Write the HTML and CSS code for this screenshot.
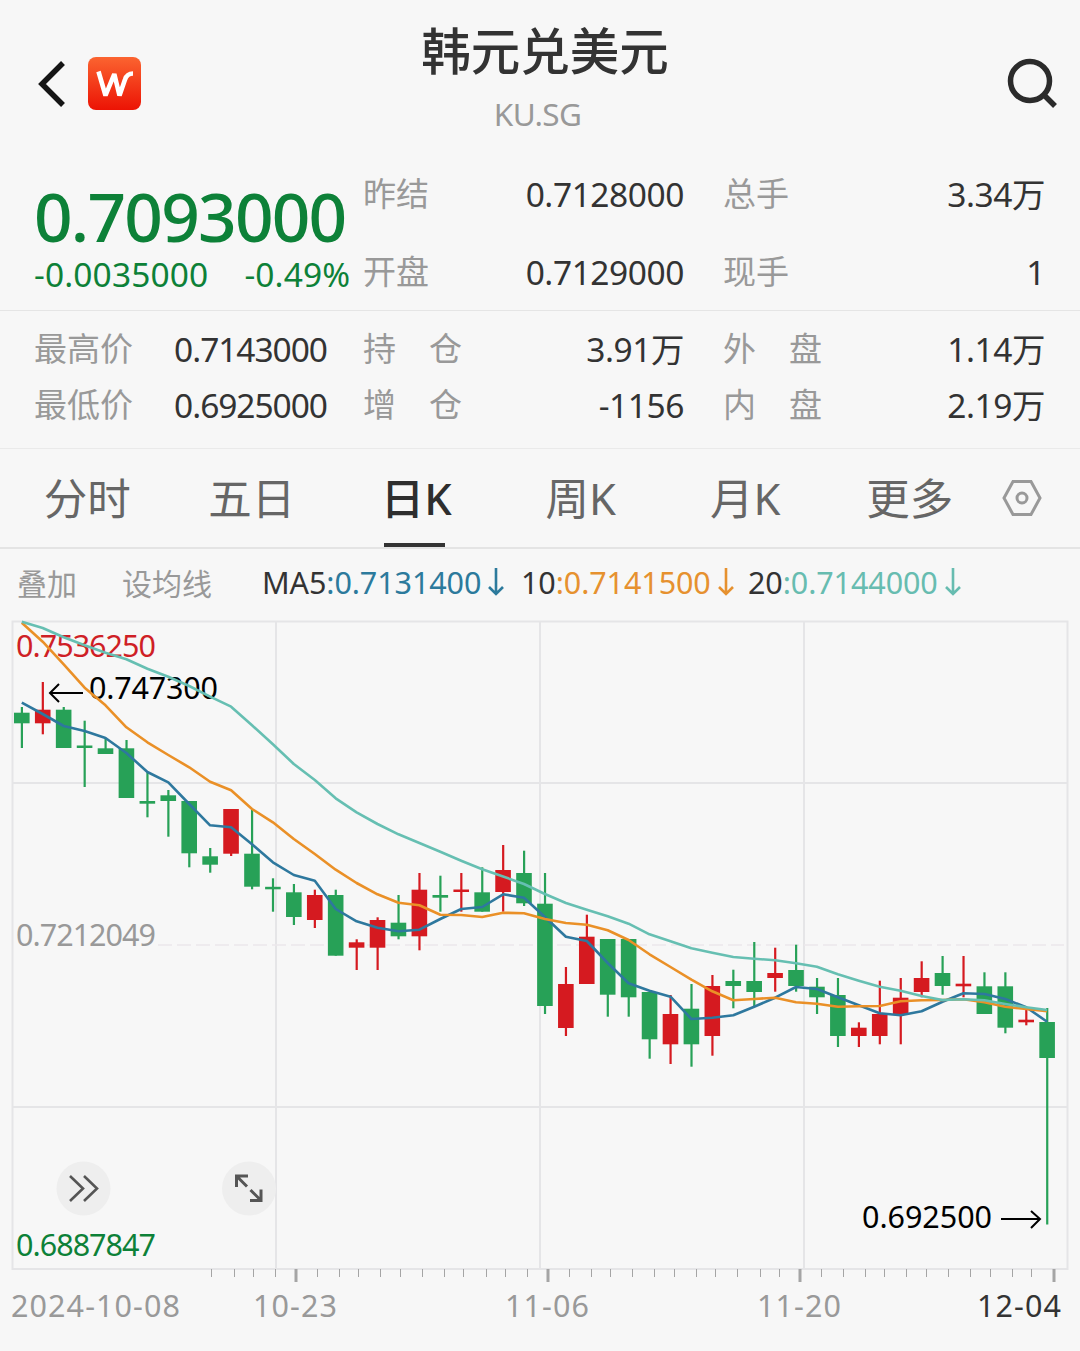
FILE: index.html
```html
<!DOCTYPE html>
<html lang="zh-CN">
<head>
    <meta charset="UTF-8">
    <title>韩元兑美元 KU.SG</title>
    <link rel="stylesheet" href="styles.css">
</head>
<body>
    <header class="header">
        <div class="nav-left">
            <svg class="back" width="28" height="46" viewBox="0 0 28 46"><path d="M25 2 L4 23 L25 44"/></svg>
            <svg class="logo" width="53" height="53" viewBox="0 0 53 53">
                <defs>
                    <linearGradient id="logoBg" x1="0" y1="0" x2="0" y2="1">
                        <stop offset="0" stop-color="#fb6430"/>
                        <stop offset="1" stop-color="#ec1304"/>
                    </linearGradient>
                </defs>
                <rect width="53" height="53" rx="8" fill="url(#logoBg)"/>
                <path class="logo-mark" d="M10.500 14.500 L17.500 38.500 L26.300 17 L31.500 38.500 L37 22.500 Q39 16.500 45 16.500"/>
            </svg>
        </div>
        <div class="title">
            <h1>韩元兑美元</h1>
            <p>KU.SG</p>
        </div>
        <svg class="search" width="54" height="54" viewBox="0 0 54 54"><circle cx="24" cy="24" r="19.5"/><path d="M38 38 L49 49"/></svg>
    </header>

    <section class="quote">
        <div class="price">
            <div class="last">0.7093000</div>
            <div class="change"><span>-0.0035000</span><span>-0.49%</span></div>
        </div>
        <div class="item"><label>昨结</label><span>0.7128000</span></div>
        <div class="item"><label>总手</label><span>3.34万</span></div>
        <div class="item"><label>开盘</label><span>0.7129000</span></div>
        <div class="item"><label>现手</label><span>1</span></div>
    </section>

    <section class="quote detail">
        <div class="item first"><label>最高价</label><span>0.7143000</span></div>
        <div class="item"><label>持　仓</label><span>3.91万</span></div>
        <div class="item"><label>外　盘</label><span>1.14万</span></div>
        <div class="item first"><label>最低价</label><span>0.6925000</span></div>
        <div class="item"><label>增　仓</label><span>-1156</span></div>
        <div class="item"><label>内　盘</label><span>2.19万</span></div>
    </section>

    <nav class="tabs">
        <a class="tab">分时</a>
        <a class="tab">五日</a>
        <a class="tab active">日K</a>
        <a class="tab">周K</a>
        <a class="tab">月K</a>
        <a class="tab">更多</a>
        <svg class="settings" width="40" height="38" viewBox="0 0 40 38"><path d="M11 2.500 H29 L38 19 L29 35.500 H11 L2 19 Z"/><circle cx="20" cy="19" r="5"/></svg>
    </nav>

    <div class="ma-bar">
        <span class="overlay">叠加</span>
        <span class="set-ma">设均线</span>
        <span class="ma ma5"><b>MA5</b>:0.7131400<svg width="18" height="28" viewBox="0 0 18 28"><path d="M9 0 V26 M2 19 L9 26 L16 19"/></svg></span>
        <span class="ma ma10"><b>10</b>:0.7141500<svg width="18" height="28" viewBox="0 0 18 28"><path d="M9 0 V26 M2 19 L9 26 L16 19"/></svg></span>
        <span class="ma ma20"><b>20</b>:0.7144000<svg width="18" height="28" viewBox="0 0 18 28"><path d="M9 0 V26 M2 19 L9 26 L16 19"/></svg></span>
    </div>

    <svg class="chart" width="1080" height="731" viewBox="0 620 1080 731">
        <g class="grid">
            <path d="M276 621 V1269 M540 621 V1269 M804 621 V1269"/>
            <path d="M12 783 H1067 M12 1107 H1067"/>
            <path class="mid" d="M158 945 H1064"/>
            <rect x="12.5" y="621.5" width="1055" height="647.5"/>
        </g>

        <g class="tool">
            <circle cx="83.5" cy="1188.5" r="27"/>
            <path d="M70 1176 L83 1188.500 L70 1201 M84 1176 L97 1188.500 L84 1201"/>
        </g>
        <g class="tool expand">
            <circle cx="249" cy="1188.5" r="27"/>
            <path d="M236.500 1187 V1176 H248 M237 1176.500 L247 1186.500 M250.500 1190 L261 1200.500 M250 1200.500 H261 V1189.500"/>
        </g>

        <g id="candles"></g>
        <g id="ticks"></g>

        <text class="top-price" x="16" y="657" textLength="140">0.7536250</text>
        <text class="mid-price" x="16" y="946" textLength="140">0.7212049</text>
        <text class="low-price" x="16" y="1256" textLength="140">0.6887847</text>

        <text class="mark" x="89" y="699" textLength="129">0.747300</text>
        <path class="mark-arrow" d="M83 693 H50 M59 684 L50 693 L59 702"/>
        <text class="mark" x="862" y="1228" textLength="130">0.692500</text>
        <path class="mark-arrow" d="M1001 1219 H1040 M1031 1211 L1040 1219 L1031 1228"/>

        <g id="lines"></g>

        <text class="date" x="11" y="1317" textLength="169">2024-10-08</text>
        <text class="date" x="253" y="1317" textLength="84">10-23</text>
        <text class="date" x="505" y="1317" textLength="84">11-06</text>
        <text class="date" x="757" y="1317" textLength="84">11-20</text>
        <text class="date today" x="977" y="1317" textLength="84">12-04</text>
    </svg>
    <script src="chart.js"></script>
</body>
</html>
```

FILE: styles.css
```css
* {
    box-sizing: border-box;
}
body {
    margin: 0;
    width: 1080px;
    background-color: #f7f7f7;
    color: #333;
    font-family: "Noto Sans", "Noto Sans CJK SC", sans-serif;
}
.header {
    display: grid;
    grid-template-columns: 160px 1fr 160px;
    height: 155px;
}
.nav-left {
    display: flex;
    align-items: center;
    height: 55px;
    margin-top: 56px;
    padding-left: 38px;
    gap: 22px;
}
.back {
    fill: none;
    stroke: #151515;
    stroke-width: 5.5;
}
.logo-mark {
    fill: none;
    stroke: white;
    stroke-width: 4.6;
    stroke-linejoin: bevel;
}
.title {
    text-align: center;
}
.title h1 {
    margin: 15px 0 0;
    padding-left: 10px;
    font-size: 49.5px;
    font-weight: 500;
    line-height: 72px;
}
.title p {
    margin: 5px 0 0;
    padding-right: 5px;
    font-size: 31.5px;
    line-height: 44px;
    letter-spacing: -0.02em;
    color: #999;
}
.search {
    justify-self: end;
    margin: 57px 20px 0 0;
    fill: none;
    stroke: #2b2b2b;
    stroke-width: 5.5;
}
.quote {
    display: grid;
    grid-template-columns: 329px 321px 322px;
    grid-template-rows: 78px 78px;
    height: 156px;
    padding-left: 34px;
    border-bottom: 1px solid #e5e5e5;
}
.price {
    grid-row: 1 / 3;
    color: #0d8138;
}
.last {
    height: 80px;
    margin-top: 21px;
    line-height: 80px;
    font-size: 67.5px;
    font-weight: 500;
    letter-spacing: -0.026em;
}
.change {
    display: flex;
    gap: 36px;
    line-height: 36px;
    font-size: 33.5px;
    letter-spacing: 0.004em;
}
.item {
    display: flex;
    align-items: center;
    justify-content: space-between;
    font-size: 33.5px;
    letter-spacing: -0.013em;
    line-height: 40px;
}
.item:nth-child(odd):not(.first) {
    margin-left: 39px;
    margin-right: -39px;
}
.item label {
    font-size: 33px;
    letter-spacing: 0;
    color: #999;
}
.detail {
    grid-template-rows: 56px 56px;
    height: 138px;
    padding-top: 10px;
    border-color: #eaeaea;
}
.detail .item:nth-child(3n+2) {
    margin: 0;
}
.detail .item:nth-child(3n) {
    margin-left: 39px;
    margin-right: -39px;
}
.detail .first {
    margin: 0;
    padding-right: 36px;
    letter-spacing: -0.031em;
}
.tabs {
    display: flex;
    align-items: center;
    height: 100px;
    padding-left: 5px;
    border-bottom: 2px solid #e4e4e4;
}
.tab {
    position: relative;
    width: 164.5px;
    line-height: 98px;
    font-size: 43.5px;
    text-align: center;
    color: #666;
}
.tab.active {
    color: #2e2e2e;
    font-weight: 500;
}
.tab.active::after {
    content: "";
    position: absolute;
    left: 50px;
    bottom: 0;
    width: 61px;
    height: 4px;
    background-color: #333;
}
.settings {
    margin-left: 10px;
    fill: none;
    stroke: #999;
    stroke-width: 3;
}
.ma-bar {
    display: flex;
    align-items: center;
    height: 71px;
    padding: 0 0 5px 17px;
    font-size: 30px;
    color: #999;
}
.set-ma {
    margin-left: 45px;
}
.ma {
    display: flex;
    align-items: center;
    width: 227px;
    font-size: 30.5px;
    letter-spacing: -0.003em;
}
.ma b {
    color: #333;
    font-weight: 400;
}
.ma svg {
    margin-left: 6px;
    fill: none;
    stroke: currentColor;
    stroke-width: 2.6;
}
.ma5 {
    width: 259px;
    margin-left: 50px;
    color: #2c7a9c;
}
.ma10 {
    color: #e6912f;
}
.ma20 {
    color: #67bcb0;
}
.chart {
    display: block;
    font-size: 30.5px;
}
.grid path, .grid rect {
    fill: none;
    stroke: #e5e5e7;
    stroke-width: 2;
}
.grid .mid {
    stroke: #ebe8eb;
    stroke-width: 1.5;
    stroke-dasharray: 14 5;
}
.tool circle {
    fill: #eee;
}
.tool path {
    fill: none;
    stroke: #555;
    stroke-width: 2.6;
}
.expand path {
    stroke-width: 3;
}
.up {
    fill: #d51a20;
}
.down {
    fill: #27a157;
}
.line {
    fill: none;
    stroke-width: 2.6;
    stroke-linejoin: round;
}
.line5 {
    stroke: #2e789e;
}
.line10 {
    stroke: #ea9027;
}
.line20 {
    stroke: #66bfb2;
}
.tick {
    fill: #a5a5a5;
}
.top-price {
    fill: #cf1f26;
}
.mid-price, .date {
    fill: #999;
}
.low-price {
    fill: #0d8138;
}
.mark {
    fill: #000;
}
.mark-arrow {
    fill: none;
    stroke: #000;
    stroke-width: 2;
}
.date.today {
    fill: #333;
}
```

FILE: chart.js
```js
const SVG_NS = 'http://www.w3.org/2000/svg';
const START_X = 21.8;
const STEP = 20.925;

// direction, high, body top, body bottom, low
const candles = [
    ['down', 707, 712.7, 723.3, 748], ['up', 682, 709.7, 723.3, 734.3],
    ['down', 707, 709.7, 748, 748], ['down', 720.7, 745.5, 748, 787],
    ['down', 738.3, 748.3, 754, 754], ['down', 740, 748.3, 798, 798],
    ['down', 772.3, 801, 803.7, 817.3], ['down', 790, 795.3, 801, 836.7],
    ['down', 801, 801, 853.3, 867.3], ['down', 848, 856.3, 864.7, 872.7],
    ['up', 809, 809, 853.7, 856], ['down', 809, 853.7, 886.7, 889.3],
    ['down', 878.3, 886.8, 889.3, 911.7], ['down', 884, 892.3, 917, 925],
    ['up', 889.7, 895, 920, 928], ['down', 889.7, 895, 955.7, 955.7],
    ['up', 939.3, 942.3, 947.7, 970], ['up', 917.3, 920, 947.7, 970],
    ['down', 895, 922.7, 936.3, 939.3], ['up', 873, 889.7, 936.3, 950.3],
    ['down', 875.7, 895, 897.7, 911.7], ['up', 873, 889.5, 892, 911.7],
    ['down', 867.3, 892.3, 911.7, 911.7], ['up', 845, 870, 892, 911.7],
    ['down', 850.7, 873, 903.3, 906], ['down', 873, 903.7, 1006, 1014],
    ['up', 967, 984, 1028, 1036], ['up', 914.7, 936.7, 984, 984],
    ['down', 939, 939, 994.7, 1016.7], ['down', 939, 939, 997.3, 1016.7],
    ['down', 992, 992, 1039.3, 1058.7], ['up', 995, 1014, 1044.3, 1064],
    ['down', 984, 1008.7, 1044.3, 1066.7], ['up', 975, 986, 1036, 1055.7],
    ['down', 969.7, 981, 986, 1008.3], ['down', 942, 981, 992, 1006],
    ['up', 947.7, 973, 978, 991.7], ['down', 944.7, 970, 986, 991.7],
    ['down', 978, 986.7, 997.3, 1014], ['down', 978, 995, 1036, 1047],
    ['up', 1022.3, 1027.7, 1036, 1047], ['up', 980.7, 1014, 1036, 1044.3],
    ['up', 978, 997.7, 1014, 1044.3], ['up', 961.3, 978, 992, 997.3],
    ['down', 956, 973, 986, 994.7], ['up', 956, 983.7, 986.3, 997.3],
    ['down', 972.3, 986.3, 1014, 1014], ['down', 972.3, 986.3, 1027.7, 1033.3],
    ['up', 1008.7, 1019.7, 1022.3, 1025.3], ['down', 1008, 1022, 1058, 1224.5]
];

const averages = {
    line5: [702.7, 714, 726, 731, 738, 753, 772, 782.3, 804, 825.3, 827.3, 844.3, 862.3, 875, 880.7, 909, 921.3, 927.7, 931.3, 929.7, 919, 909, 907, 894.3, 897.7, 917, 936.7, 941, 963, 983.3, 990.7, 996.7, 1019, 1017.7, 1015.3, 1006.7, 997.7, 987, 989, 997.3, 1005.3, 1013.3, 1015.3, 1011.3, 1001.7, 993.3, 994, 999, 1007.3, 1021.7],
    line10: [622.7, 641.7, 664.3, 687.7, 705.3, 727.3, 742.3, 755, 767.3, 781.7, 790.3, 809, 822.3, 839, 854, 869.7, 883, 894.3, 902.7, 905.3, 914.7, 915, 917, 912.7, 913.3, 919, 923, 924.7, 930.3, 940, 954.3, 967, 979.7, 991.3, 1000.3, 999, 997.7, 1002.3, 1003.7, 1006.7, 1006.3, 1006, 1001.3, 1000.3, 1000, 999.3, 1002.3, 1006.7, 1009, 1011.3],
    line20: [621.7, 628, 637.3, 645.3, 652.7, 659.3, 668.7, 676.7, 686, 696.7, 706.7, 725.3, 744.3, 764, 780, 798.3, 812.3, 824, 834.3, 843, 851.7, 860.7, 869.3, 876.5, 884, 894, 903, 909.7, 916.3, 923.7, 934.3, 941.3, 948.3, 952.7, 957, 958.7, 960.3, 963.3, 966.7, 974.3, 980.7, 986.7, 990.7, 996, 1000, 999.3, 1000.3, 1004, 1007.3, 1010]
};

const ticks = [211, 234, 253, 275, 296, 317, 339, 358, 380, 400, 422, 444, 463, 486, 505, 527, 548, 569, 591, 610, 632, 654, 674, 696, 715, 737, 760, 779, 800, 821, 843, 865, 884, 906, 926, 948, 970, 990, 1012, 1031, 1054];
const majorTicks = [296, 548, 800, 1054];

function add(parent, tag, attrs) {
    const el = document.createElementNS(SVG_NS, tag);
    for (const key in attrs) {
        el.setAttribute(key, attrs[key]);
    }
    document.getElementById(parent).appendChild(el);
}

candles.forEach(([dir, high, top, bottom, low], i) => {
    const x = START_X + i * STEP;
    add('candles', 'rect', { class: dir, x: x - 1, y: high, width: 2.2, height: low - high });
    add('candles', 'rect', { class: dir, x: x - 7.8, y: top, width: 15.6, height: bottom - top });
});

['line5', 'line10', 'line20'].forEach(name => {
    const points = averages[name].map((y, i) => `${(START_X + i * STEP).toFixed(1)},${y}`).join(' ');
    add('lines', 'polyline', { class: `line ${name}`, points });
});

ticks.forEach(x => {
    const major = majorTicks.includes(x);
    add('ticks', 'rect', { class: 'tick', x: major ? x - 1.5 : x, y: 1269, width: major ? 3 : 1, height: major ? 13 : 8 });
});
```
